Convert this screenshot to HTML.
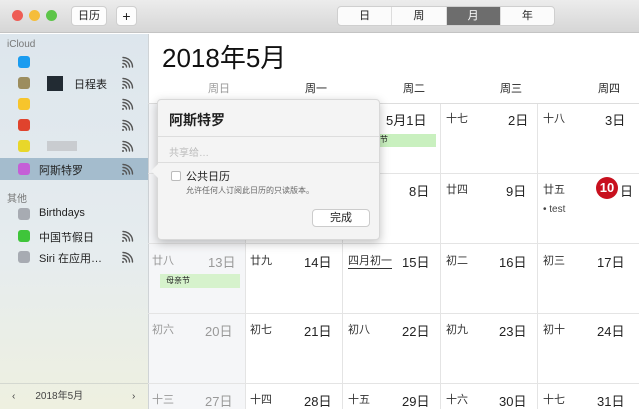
<!DOCTYPE html>
<html><head><meta charset="utf-8"><style>
*{margin:0;padding:0;box-sizing:border-box}
body{width:639px;height:409px;overflow:hidden;position:relative;background:#fff;font-family:"Liberation Sans","Noto Sans CJK SC",sans-serif;color:#222}
.a{position:absolute}
.tb{left:0;top:0;width:639px;height:33px;background:linear-gradient(#ececec,#d6d6d6);border-bottom:1px solid #c4c4c4}
.dot{width:11px;height:11px;border-radius:50%;top:10px}
.btn{background:#fdfdfd;border:1px solid #cfcfcf;border-radius:4px;font-size:11px;text-align:center;line-height:18px;height:20px;top:6px}
.seg{top:6px;left:337px;height:20px;width:218px;display:flex;border:1px solid #cfcfcf;border-radius:4px;background:#fbfbfb;overflow:hidden}
.seg div{flex:1;text-align:center;font-size:11px;line-height:18px;border-left:1px solid #ddd}
.seg div:first-child{border-left:none}
.sb{left:0;top:34px;width:148px;height:375px;background:linear-gradient(#dde6ed,#e6ecee 60%,#eef0e0)}
.sec{font-size:10px;color:#777;left:7px}
.row{left:0;width:148px;height:21px;font-size:11px}
.sq{position:absolute;left:18px;top:4px;width:12px;height:12px;border-radius:3px}
.row .t{position:absolute;left:39px;top:3px}
.wifi{position:absolute;left:121px;top:4px;width:13px;height:13px}
.ct{font-size:11px}
.d{font-size:13px;color:#222}
.l{font-size:11px;color:#333}
.vl{width:1px;background:#e4e4e4;top:104px;height:305px}
.hl{height:1px;background:#e4e4e4;left:148px;width:491px}
.pop{left:157px;top:99px;width:223px;height:141px;background:#f4f4f4;border:1px solid #d8d8d8;border-radius:4px;box-shadow:0 3px 10px rgba(0,0,0,.25)}
</style></head><body>
<svg width="0" height="0" style="position:absolute"><defs><symbol id="w" viewBox="0 0 13 13"><g fill="none" stroke="#555" stroke-width="1.4" stroke-linecap="round"><circle cx="2" cy="11" r="1" fill="#555" stroke="none"/><path d="M2 7.5a3.5 3.5 0 0 1 3.5 3.5"/><path d="M2 4.5a6.5 6.5 0 0 1 6.5 6.5"/><path d="M2 1.5a9.5 9.5 0 0 1 9.5 9.5"/></g></symbol></defs></svg>
<div class="a tb"></div>
<div class="a dot" style="left:12px;background:#ee5d55"></div>
<div class="a dot" style="left:29px;background:#f5bd3a"></div>
<div class="a dot" style="left:46px;background:#5dc549"></div>
<div class="a btn" style="left:71px;width:36px">日历</div>
<div class="a btn" style="left:116px;width:21px;font-size:14px">+</div>
<div class="a seg"><div>日</div><div>周</div><div style="background:#6d6d6d;color:#fff">月</div><div>年</div></div>

<div class="a sb"></div>
<div class="a sec" style="top:39px">iCloud</div>
<div class="a row" style="top:52px"><span class="sq" style="background:#1a9cf0"></span><svg class="wifi"><use href="#w"/></svg></div>
<div class="a row" style="top:73px"><span class="sq" style="background:#9c8d5e"></span><span style="position:absolute;left:47px;top:3px;width:16px;height:15px;background:#222b33"></span><span class="t" style="left:74px">日程表</span><svg class="wifi"><use href="#w"/></svg></div>
<div class="a row" style="top:94px"><span class="sq" style="background:#f7c52c"></span><svg class="wifi"><use href="#w"/></svg></div>
<div class="a row" style="top:115px"><span class="sq" style="background:#e0432d"></span><svg class="wifi"><use href="#w"/></svg></div>
<div class="a row" style="top:136px"><span class="sq" style="background:#e8d72a"></span><span style="position:absolute;left:47px;top:5px;width:30px;height:10px;background:#c9ccd0"></span><svg class="wifi"><use href="#w"/></svg></div>
<div class="a row" style="top:158px;background:#a4bccd;height:22px"><span class="sq" style="background:#c55fd7;top:5px"></span><span class="t" style="top:4px">阿斯特罗</span><svg class="wifi" style="top:5px"><use href="#w"/></svg></div>
<div class="a sec" style="top:190px">其他</div>
<div class="a row" style="top:204px"><span class="sq" style="background:#a7abb2"></span><span class="t">Birthdays</span></div>
<div class="a row" style="top:226px"><span class="sq" style="background:#3fc53a"></span><span class="t">中国节假日</span><svg class="wifi"><use href="#w"/></svg></div>
<div class="a row" style="top:247px"><span class="sq" style="background:#a7abb2"></span><span class="t">Siri 在应用…</span><svg class="wifi"><use href="#w"/></svg></div>
<div class="a" style="left:0;top:383px;width:148px;height:26px;border-top:1px solid #d4d8d0;font-size:10px;color:#444;line-height:26px"><span style="margin-left:12px">‹</span><span style="margin-left:20px">2018年5月</span><span style="position:absolute;left:132px">›</span></div>

<div class="a" style="left:148px;top:34px;width:1px;height:375px;background:#cfd3d6"></div>
<div class="a" style="left:149px;top:104px;width:96px;height:305px;background:#f5f6f8"></div>
<div class="a" style="left:162px;top:38px;font-size:26px;color:#111">2018年5月</div>
<div class="a ct" style="left:208px;top:80px;color:#999">周日</div>
<div class="a ct" style="left:305px;top:80px">周一</div>
<div class="a ct" style="left:403px;top:80px">周二</div>
<div class="a ct" style="left:500px;top:80px">周三</div>
<div class="a ct" style="left:598px;top:80px">周四</div>
<div class="a hl" style="top:103px;background:#ddd"></div>
<div class="a hl" style="top:173px"></div><div class="a hl" style="top:243px"></div><div class="a hl" style="top:313px"></div><div class="a hl" style="top:383px"></div>
<div class="a vl" style="left:245px"></div><div class="a vl" style="left:342px"></div><div class="a vl" style="left:440px"></div><div class="a vl" style="left:537px"></div>

<div class="a d" style="left:386px;top:110px">5月1日</div>
<div class="a l" style="left:446px;top:110px">十七</div><div class="a d" style="left:508px;top:110px">2日</div>
<div class="a l" style="left:543px;top:110px">十八</div><div class="a d" style="left:605px;top:110px">3日</div>
<div class="a" style="left:380px;top:134px;width:56px;height:13px;background:#c9f0bf;font-size:8px">节</div>
<div class="a d" style="left:409px;top:181px">8日</div>
<div class="a l" style="left:446px;top:181px">廿四</div><div class="a d" style="left:506px;top:181px">9日</div>
<div class="a l" style="left:543px;top:181px">廿五</div>
<div class="a" style="left:596px;top:177px;width:22px;height:22px;border-radius:50%;background:#c8101e;color:#fff;font-size:13px;text-align:center;line-height:22px;font-weight:bold">10</div>
<div class="a d" style="left:620px;top:181px">日</div>
<div class="a" style="left:543px;top:204px;font-size:10px;color:#444">• test</div>
<div class="a l" style="left:152px;top:252px;color:#999">廿八</div><div class="a d" style="left:208px;top:252px;color:#999">13日</div>
<div class="a" style="left:160px;top:274px;width:80px;height:14px;background:#d6f2cc;font-size:8px;padding-left:6px;line-height:14px">母亲节</div>
<div class="a l" style="left:250px;top:252px">廿九</div><div class="a d" style="left:304px;top:252px">14日</div>
<div class="a l" style="left:348px;top:252px;border-bottom:1px solid #333">四月初一</div><div class="a d" style="left:402px;top:252px">15日</div>
<div class="a l" style="left:446px;top:252px">初二</div><div class="a d" style="left:499px;top:252px">16日</div>
<div class="a l" style="left:543px;top:252px">初三</div><div class="a d" style="left:597px;top:252px">17日</div>
<div class="a l" style="left:152px;top:321px;color:#999">初六</div><div class="a d" style="left:205px;top:321px;color:#999">20日</div>
<div class="a l" style="left:250px;top:321px">初七</div><div class="a d" style="left:304px;top:321px">21日</div>
<div class="a l" style="left:348px;top:321px">初八</div><div class="a d" style="left:402px;top:321px">22日</div>
<div class="a l" style="left:446px;top:321px">初九</div><div class="a d" style="left:499px;top:321px">23日</div>
<div class="a l" style="left:543px;top:321px">初十</div><div class="a d" style="left:597px;top:321px">24日</div>
<div class="a l" style="left:152px;top:391px;color:#999">十三</div><div class="a d" style="left:205px;top:391px;color:#999">27日</div>
<div class="a l" style="left:250px;top:391px">十四</div><div class="a d" style="left:304px;top:391px">28日</div>
<div class="a l" style="left:348px;top:391px">十五</div><div class="a d" style="left:402px;top:391px">29日</div>
<div class="a l" style="left:446px;top:391px">十六</div><div class="a d" style="left:499px;top:391px">30日</div>
<div class="a l" style="left:543px;top:391px">十七</div><div class="a d" style="left:597px;top:391px">31日</div>

<div class="a pop"></div>
<div class="a" style="left:151px;top:164px;width:0;height:0;border-top:7px solid transparent;border-bottom:7px solid transparent;border-right:7px solid #f4f4f4"></div>
<div class="a" style="left:169px;top:110px;font-size:14px;font-weight:bold;color:#222">阿斯特罗</div>
<div class="a" style="left:158px;top:136px;width:221px;height:1px;background:#ddd"></div>
<div class="a" style="left:169px;top:144px;font-size:10px;color:#bbb">共享给…</div>
<div class="a" style="left:158px;top:162px;width:221px;height:1px;background:#ddd"></div>
<div class="a" style="left:171px;top:171px;width:10px;height:10px;border:1px solid #bbb;background:#fff;border-radius:2px"></div>
<div class="a" style="left:186px;top:168px;font-size:11px;color:#222">公共日历</div>
<div class="a" style="left:186px;top:185px;font-size:8px;color:#666">允许任何人订阅此日历的只读版本。</div>
<div class="a" style="left:312px;top:209px;width:58px;height:18px;background:#fff;border:1px solid #ccc;border-radius:4px;font-size:11px;text-align:center;line-height:16px">完成</div>
</body></html>
